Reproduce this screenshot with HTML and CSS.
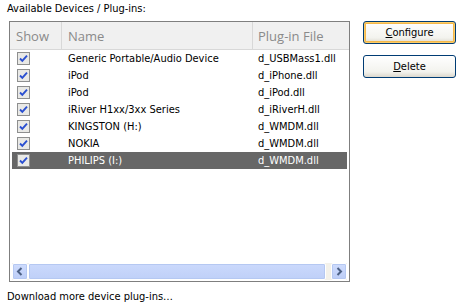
FILE: index.html
```html
<html>
<head>
  <link rel="stylesheet" href="styles.css">
</head>
<body>
<div class="page">
  <div class="caption">Available Devices / Plug-ins:</div>
  <div class="main">
    <div class="listbox">
      <div class="header">
        <div class="hcol hshow">Show</div>
        <div class="hcol hname">Name</div>
        <div class="hcol hfile">Plug-in File</div>
      </div>
      <div class="rows">
        <div class="row">
          <div class="cshow"><svg class="check" width="13" height="13" viewBox="0 0 13 13"><rect x="0.5" y="0.5" width="12" height="12" fill="#e9e9e6" stroke="#8e8f8f"/><path d="M3 6.5 L5.3 8.8 L10 3.6" fill="none" stroke="#2a4fd0" stroke-width="1.9"/></svg></div>
          <div class="cname">Generic Portable/Audio Device</div>
          <div class="cfile">d_USBMass1.dll</div>
        </div>
        <div class="row">
          <div class="cshow"><svg class="check" width="13" height="13" viewBox="0 0 13 13"><rect x="0.5" y="0.5" width="12" height="12" fill="#e9e9e6" stroke="#8e8f8f"/><path d="M3 6.5 L5.3 8.8 L10 3.6" fill="none" stroke="#2a4fd0" stroke-width="1.9"/></svg></div>
          <div class="cname">iPod</div>
          <div class="cfile">d_iPhone.dll</div>
        </div>
        <div class="row">
          <div class="cshow"><svg class="check" width="13" height="13" viewBox="0 0 13 13"><rect x="0.5" y="0.5" width="12" height="12" fill="#e9e9e6" stroke="#8e8f8f"/><path d="M3 6.5 L5.3 8.8 L10 3.6" fill="none" stroke="#2a4fd0" stroke-width="1.9"/></svg></div>
          <div class="cname">iPod</div>
          <div class="cfile">d_iPod.dll</div>
        </div>
        <div class="row">
          <div class="cshow"><svg class="check" width="13" height="13" viewBox="0 0 13 13"><rect x="0.5" y="0.5" width="12" height="12" fill="#e9e9e6" stroke="#8e8f8f"/><path d="M3 6.5 L5.3 8.8 L10 3.6" fill="none" stroke="#2a4fd0" stroke-width="1.9"/></svg></div>
          <div class="cname">iRiver H1xx/3xx Series</div>
          <div class="cfile">d_iRiverH.dll</div>
        </div>
        <div class="row">
          <div class="cshow"><svg class="check" width="13" height="13" viewBox="0 0 13 13"><rect x="0.5" y="0.5" width="12" height="12" fill="#e9e9e6" stroke="#8e8f8f"/><path d="M3 6.5 L5.3 8.8 L10 3.6" fill="none" stroke="#2a4fd0" stroke-width="1.9"/></svg></div>
          <div class="cname">KINGSTON (H:)</div>
          <div class="cfile">d_WMDM.dll</div>
        </div>
        <div class="row">
          <div class="cshow"><svg class="check" width="13" height="13" viewBox="0 0 13 13"><rect x="0.5" y="0.5" width="12" height="12" fill="#e9e9e6" stroke="#8e8f8f"/><path d="M3 6.5 L5.3 8.8 L10 3.6" fill="none" stroke="#2a4fd0" stroke-width="1.9"/></svg></div>
          <div class="cname">NOKIA</div>
          <div class="cfile">d_WMDM.dll</div>
        </div>
        <div class="row selected">
          <div class="cshow"><svg class="check" width="13" height="13" viewBox="0 0 13 13"><rect x="0.5" y="0.5" width="12" height="12" fill="#e9e9e6" stroke="#8e8f8f"/><path d="M3 6.5 L5.3 8.8 L10 3.6" fill="none" stroke="#2a4fd0" stroke-width="1.9"/></svg></div>
          <div class="cname">PHILIPS (I:)</div>
          <div class="cfile">d_WMDM.dll</div>
        </div>
      </div>
      <div class="hscroll">
        <div class="sb-btn"><svg width="8" height="9" viewBox="0 0 8 9"><path d="M5.5 1 L2 4.5 L5.5 8" fill="none" stroke="#4d6185" stroke-width="2"/></svg></div>
        <div class="sb-thumb"></div>
        <div class="sb-btn"><svg width="8" height="9" viewBox="0 0 8 9"><path d="M2.5 1 L6 4.5 L2.5 8" fill="none" stroke="#4d6185" stroke-width="2"/></svg></div>
      </div>
    </div>
    <div class="buttons">
      <button type="button" class="btn default"><u>C</u>onfigure</button>
      <button type="button" class="btn"><u>D</u>elete</button>
    </div>
  </div>
  <div class="link">Download more device plug-ins…</div>
</div>
</body>
</html>
```

FILE: styles.css
```css
body {
  margin: 0;
  background: #fff;
  color: #000;
  font-family: "DejaVu Sans Condensed", "Liberation Sans", sans-serif;
  font-size: 11px;
}
.page {
  padding: 2px 0 0 7px;
}
.caption {
  height: 19px;
  line-height: 13px;
}
.main {
  display: flex;
  align-items: flex-start;
  gap: 13px;
  margin-left: 2px;
}
.listbox {
  width: 341px;
  height: 261px;
  box-sizing: border-box;
  border: 1px solid #7f7f7f;
  display: flex;
  flex-direction: column;
}
.header {
  display: flex;
  height: 27px;
  background: #f0f0f0;
  border-bottom: 1px solid #d8d8d8;
  color: #8a8a8a;
  font-family: "Open Sans", sans-serif;
  font-size: 13px;
}
.hcol {
  display: flex;
  align-items: center;
  box-sizing: border-box;
  padding-left: 6px;
}
.hshow {
  width: 52px;
  border-right: 1px solid #d8d8d8;
}
.hname {
  width: 191px;
  border-right: 1px solid #d8d8d8;
}
.hfile {
  flex: 1;
  padding-left: 5px;
}
.rows {
  flex: 1;
  padding: 0 2px;
}
.row {
  display: flex;
  align-items: center;
  height: 17px;
}
.row.selected {
  background: #676767;
  color: #fff;
}
.cshow {
  width: 50px;
  padding-left: 5px;
  box-sizing: border-box;
  display: flex;
}
.cname {
  width: 191px;
  padding-left: 6px;
  box-sizing: border-box;
  white-space: nowrap;
}
.cfile {
  padding-left: 5px;
  white-space: nowrap;
}
.hscroll {
  display: flex;
  height: 17px;
  margin: 0 2px 1px;
  background: #f3f1ea;
}
.sb-btn {
  width: 16px;
  box-sizing: border-box;
  border: 1px solid #fff;
  border-radius: 2px;
  background: linear-gradient(#cfdcfd, #bccdf7);
  box-shadow: inset 0 0 0 1px #b5c8f2;
  display: flex;
  align-items: center;
  justify-content: center;
}
.sb-thumb {
  flex: 1;
  margin-right: 5px;
  border: 1px solid #fff;
  border-radius: 2px;
  background: linear-gradient(#cbd9fc, #bfd0f8);
  box-shadow: inset 0 0 0 1px #b5c8f2;
}
.buttons {
  display: flex;
  flex-direction: column;
  gap: 11px;
}
.btn {
  width: 93px;
  height: 23px;
  box-sizing: border-box;
  border: 1px solid #003c74;
  border-radius: 3px;
  background: linear-gradient(#ffffff, #f3f3ee 75%, #dcd8cd);
  font-family: "DejaVu Sans Condensed", "Liberation Sans", sans-serif;
  font-size: 11px;
  color: #000;
  padding: 0;
}
.btn.default {
  box-shadow: inset 0 0 0 1px #fbcc6a, inset 0 0 0 2px #f4b84a;
}
.link {
  margin-top: 8px;
  line-height: 13px;
}
```
